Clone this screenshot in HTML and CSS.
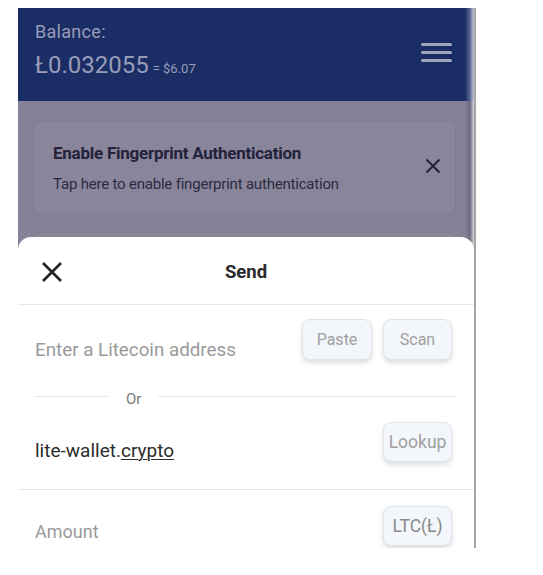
FILE: index.html
```html
<!DOCTYPE html>
<html lang="en">
<head>
<meta charset="utf-8">
<title>Send</title>
<link rel="stylesheet" href="styles.css">
</head>
<body>
<div class="phone">
  <header class="topbar">
    <div class="balance">
      <div class="balance-label">Balance:</div>
      <div class="balance-value"><span class="ltc">Ł0.032055</span><span class="usd">= $6.07</span></div>
    </div>
    <div class="menu"><span></span><span></span><span></span></div>
  </header>
  <main class="dimmed">
    <div class="card">
      <div class="card-text">
        <div class="card-title">Enable Fingerprint Authentication</div>
        <div class="card-sub">Tap here to enable fingerprint authentication</div>
      </div>
      <svg class="card-close" viewBox="0 0 16 16" width="16" height="16"><path d="M1.5 1.5 L14.5 14.5 M14.5 1.5 L1.5 14.5" stroke="#23223a" stroke-width="2" fill="none"/></svg>
    </div>
    <div class="card card-next"></div>
  </main>
  <section class="sheet">
    <div class="sheet-head">
      <svg class="sheet-close" viewBox="0 0 22 22" width="22" height="22"><path d="M2 2 L20 20 M20 2 L2 20" stroke="#222" stroke-width="2.6" fill="none"/></svg>
      <div class="sheet-title">Send</div>
    </div>
    <div class="row addr-row">
      <div class="field placeholder">Enter a Litecoin address</div>
      <div class="btns">
        <button class="btn">Paste</button>
        <button class="btn">Scan</button>
      </div>
    </div>
    <div class="or-row">
      <span class="or-line short"></span>
      <span class="or-text">Or</span>
      <span class="or-line long"></span>
    </div>
    <div class="row lookup-row">
      <div class="field domain">lite-wallet.<u>crypto</u></div>
      <button class="btn btn-big">Lookup</button>
    </div>
    <div class="row amount-row">
      <div class="field placeholder">Amount</div>
      <button class="btn btn-big btn-dark">LTC(Ł)</button>
    </div>
  </section>
</div>
</body>
</html>
```
FILE: styles.css
```css
html, body {
  margin: 0;
  padding: 0;
  background: #ffffff;
}

body {
  font-family: Roboto, "Liberation Sans", sans-serif;
}

.phone {
  position: relative;
  margin: 8px 0 0 18px;
  width: 456px;
  height: 540px;
  overflow: hidden;
  border-right: 2px solid #a6a6a6;
}

/* ---------- top bar ---------- */
.topbar {
  height: 93px;
  box-sizing: border-box;
  padding: 0 22px 0 17px;
  display: flex;
  justify-content: space-between;
  align-items: flex-start;
  background: linear-gradient(to right, #1b2d65 0, #1b2d65 447px, #5c6894 452px, #c4c8d6 456px);
}

.balance {
  padding-top: 13px;
  color: #989cb8;
}

.balance-label {
  font-size: 18px;
  line-height: 21px;
  letter-spacing: 0.3px;
}

.balance-value {
  margin-top: 9px;
  line-height: 28px;
  display: flex;
  align-items: baseline;
}

.ltc {
  font-size: 24px;
}

.usd {
  font-size: 13px;
  margin-left: 4px;
}

.menu {
  margin-top: 35px;
  width: 31px;
  display: flex;
  flex-direction: column;
  gap: 5px;
}

.menu span {
  display: block;
  height: 3px;
  border-radius: 2px;
  background: #a3a6bf;
}

/* ---------- dimmed page ---------- */
.dimmed {
  height: 447px;
  padding-top: 20px;
  box-sizing: border-box;
  background: linear-gradient(to right, #858196 0, #858196 447px, #6e6a80 452px, #d8d7de 456px);
}

.card {
  margin: 0 18px 0 15px;
  height: 93px;
  box-sizing: border-box;
  border-radius: 6px;
  background: #89859b;
  border: 1px solid #807c92;
  display: flex;
  justify-content: space-between;
  align-items: flex-start;
  padding: 21px 14px 0 19px;
}

.card-title {
  font-size: 17px;
  font-weight: 700;
  color: #23223a;
  line-height: 21px;
  letter-spacing: -0.25px;
}

.card-sub {
  margin-top: 11px;
  font-size: 15px;
  line-height: 18px;
  color: #2c2b40;
  letter-spacing: -0.2px;
}

.card-close {
  margin-top: 15px;
  flex: none;
}

.card-next {
  margin-top: 18px;
  padding: 0;
}

/* ---------- bottom sheet ---------- */
.sheet {
  position: absolute;
  left: 0;
  right: 0;
  top: 229px;
  bottom: 0;
  background: #ffffff;
  border-radius: 13px 13px 0 0;
}

.sheet-head {
  position: relative;
  height: 67px;
  border-bottom: 1px solid #e4e7ee;
  display: flex;
  align-items: center;
  justify-content: center;
}

.sheet-close {
  position: absolute;
  left: 23px;
  top: 24px;
}

.sheet-title {
  font-size: 18.5px;
  font-weight: 700;
  color: #2a2a2a;
  margin-top: 2px;
}

.row {
  display: flex;
  justify-content: space-between;
  align-items: flex-start;
  padding: 0 22px 0 17px;
  box-sizing: border-box;
}

.field {
  font-size: 18px;
  line-height: 22px;
}

.placeholder {
  color: #9a9a9a;
}

.addr-row {
  height: 65px;
  padding-top: 14px;
}

.addr-row .field {
  margin-top: 20px;
  font-size: 18.8px;
}

.btns {
  display: flex;
  gap: 11px;
}

.btn {
  font-family: Roboto, "Liberation Sans", sans-serif;
  height: 41px;
  width: 70px;
  padding: 0;
  box-sizing: border-box;
  border: 1px solid #dde4ec;
  border-radius: 8px;
  background: #f3f6fa;
  color: #a0a0a0;
  font-size: 16px;
  box-shadow: 0 3px 5px rgba(0, 0, 0, 0.13);
}

.btns .btn:last-child {
  width: 69px;
}

.btn-big {
  width: 69px;
  height: 40px;
  font-size: 17.5px;
}

.btn-dark {
  color: #8a8a8a;
}

.or-row {
  height: 52px;
  display: flex;
  align-items: center;
  padding: 0 18px 0 16px;
}

.or-line {
  height: 1px;
  background: #e3e6ec;
}

.or-line.short {
  width: 74px;
}

.or-line.long {
  flex: 1;
}

.or-text {
  margin: 5px 17px 0 18px;
  font-size: 15px;
  color: #7b7b7b;
  line-height: 18px;
}

.lookup-row {
  height: 68px;
  border-bottom: 1px solid #e4e7ee;
}

.domain {
  margin-top: 18px;
  font-size: 19px;
  color: #2c2c2c;
}

.domain u {
  text-decoration-thickness: 1px;
  text-underline-offset: 2px;
}

.amount-row {
  padding-top: 16px;
}

.amount-row .field {
  margin-top: 15px;
}
```
